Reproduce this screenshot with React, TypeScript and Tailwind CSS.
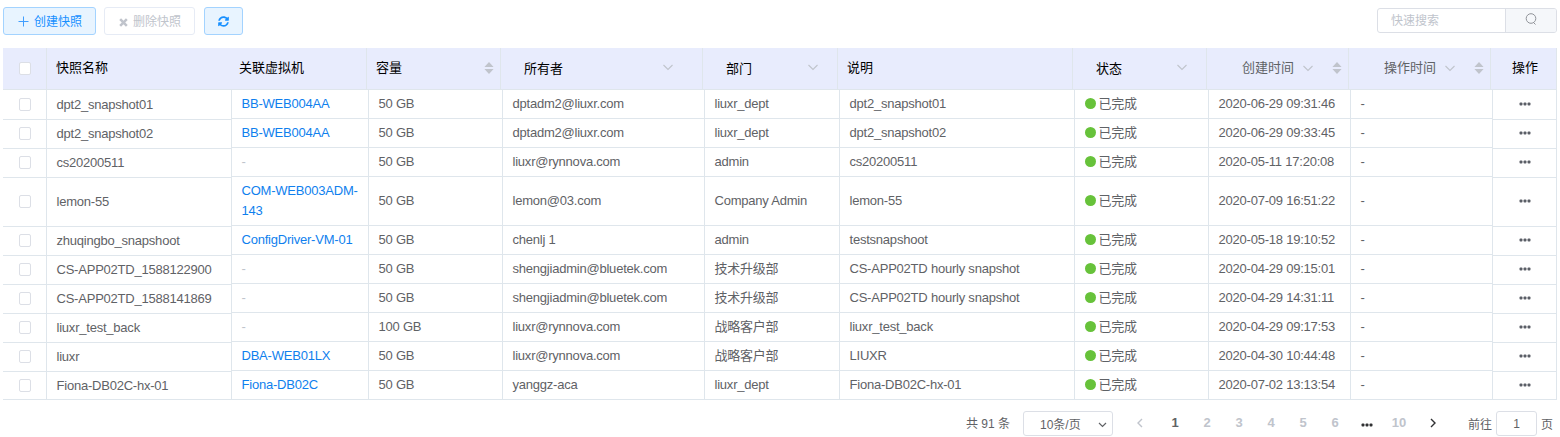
import React from "react";
import { FaSyncAlt } from "react-icons/fa";

type Row = { name: string; vm: string[]; size: string; owner: string; dept: string; desc: string; time: string };

const rows: Row[] = [
  { name: "dpt2_snapshot01", vm: ["BB-WEB004AA"], size: "50 GB", owner: "dptadm2@liuxr.com", dept: "liuxr_dept", desc: "dpt2_snapshot01", time: "2020-06-29 09:31:46" },
  { name: "dpt2_snapshot02", vm: ["BB-WEB004AA"], size: "50 GB", owner: "dptadm2@liuxr.com", dept: "liuxr_dept", desc: "dpt2_snapshot02", time: "2020-06-29 09:33:45" },
  { name: "cs20200511", vm: [], size: "50 GB", owner: "liuxr@rynnova.com", dept: "admin", desc: "cs20200511", time: "2020-05-11 17:20:08" },
  { name: "lemon-55", vm: ["COM-WEB003ADM-", "143"], size: "50 GB", owner: "lemon@03.com", dept: "Company Admin", desc: "lemon-55", time: "2020-07-09 16:51:22" },
  { name: "zhuqingbo_snapshoot", vm: ["ConfigDriver-VM-01"], size: "50 GB", owner: "chenlj 1", dept: "admin", desc: "testsnapshoot", time: "2020-05-18 19:10:52" },
  { name: "CS-APP02TD_1588122900", vm: [], size: "50 GB", owner: "shengjiadmin@bluetek.com", dept: "技术升级部", desc: "CS-APP02TD hourly snapshot", time: "2020-04-29 09:15:01" },
  { name: "CS-APP02TD_1588141869", vm: [], size: "50 GB", owner: "shengjiadmin@bluetek.com", dept: "技术升级部", desc: "CS-APP02TD hourly snapshot", time: "2020-04-29 14:31:11" },
  { name: "liuxr_test_back", vm: [], size: "100 GB", owner: "liuxr@rynnova.com", dept: "战略客户部", desc: "liuxr_test_back", time: "2020-04-29 09:17:53" },
  { name: "liuxr", vm: ["DBA-WEB01LX"], size: "50 GB", owner: "liuxr@rynnova.com", dept: "战略客户部", desc: "LIUXR", time: "2020-04-30 10:44:48" },
  { name: "Fiona-DB02C-hx-01", vm: ["Fiona-DB02C"], size: "50 GB", owner: "yanggz-aca", dept: "liuxr_dept", desc: "Fiona-DB02C-hx-01", time: "2020-07-02 13:13:54" },
];

const COLS = "grid grid-cols-[137px_134px_202px_135px_235px_134px_142px_142px]";

function sideHeight(i: number) {
  if (i === 0) return "h-[30px]";
  if (rows[i].vm.length > 1) return "h-[49px]";
  return i === rows.length - 1 ? "h-[28px]" : "h-[29px]";
}

function Checkbox() {
  return <span className="block h-[13px] w-3 rounded-[2px] border border-[#dcdfe6] bg-white" />;
}

function Chevron({ className = "" }: { className?: string }) {
  return (
    <svg className={className} width="12" height="7" viewBox="0 0 12 7" fill="none" stroke="#c0c4cc" strokeWidth="1.1">
      <path d="M1.5 1l4.5 4.4L10.5 1" />
    </svg>
  );
}

function Sort({ className = "" }: { className?: string }) {
  return (
    <svg className={className} width="10" height="12" viewBox="0 0 10 12" fill="#c0c4cc">
      <path d="M5 0l4.6 5H.4zM5 12l4.6-5H.4z" />
    </svg>
  );
}

function Head({ children, className = "" }: { children?: React.ReactNode; className?: string }) {
  return <div className={`flex h-full shrink-0 items-center border-r border-[#dfe6ec] ${className}`}>{children}</div>;
}

function Cell({ children, className = "" }: { children?: React.ReactNode; className?: string }) {
  return <div className={`flex items-center border-r border-b border-[#dfe6ec] pb-px pl-[9.5px] whitespace-nowrap ${className}`}>{children}</div>;
}

function More() {
  return (
    <svg width="12" height="4" viewBox="0 0 12 4" fill="currentColor">
      <rect x="0.5" y="0.5" width="3" height="3" rx="1" />
      <rect x="4.5" y="0.5" width="3" height="3" rx="1" />
      <rect x="8.5" y="0.5" width="3" height="3" rx="1" />
    </svg>
  );
}

export default function App() {
  return (
    <div className="h-[437px] w-[1560px] overflow-hidden bg-white px-[3px] pt-[7px] font-['Liberation_Sans','Noto_Sans_CJK_SC',sans-serif] text-[13px] leading-5 tracking-[-0.22px] text-[#5f6266]">
      <div className="flex h-[41px] items-start text-xs tracking-normal">
        <button className="flex h-7 w-[93px] items-center rounded-[3px] border border-[#a3d3ff] bg-[#e8f4ff] pl-[14px] text-[#1890ff]">
          <svg width="11" height="11" viewBox="0 0 11 11" stroke="#409eff" fill="none"><path d="M5.5 0.5v10M0.5 5.5h10" /></svg>
          <span className="ml-[5px] pt-0.5">创建快照</span>
        </button>
        <button className="ml-2 flex h-7 w-[91px] items-center rounded-[3px] border border-[#e6ebf5] bg-white pl-[14px] text-[#c0c4cc]">
          <svg className="mt-0.5" width="9" height="9" viewBox="0 0 10 10" stroke="#c0c4cc" strokeWidth="2.8"><path d="M1.3 1.3l7.4 7.4M8.7 1.3L1.3 8.7" /></svg>
          <span className="ml-[5px] pt-0.5">删除快照</span>
        </button>
        <button className="ml-[9px] flex h-7 w-[39px] items-center justify-center rounded-[3px] border border-[#a3d3ff] bg-[#e8f4ff] pt-px text-[#1890ff]">
          <FaSyncAlt size={11} />
        </button>
        <div className="mt-px ml-auto flex h-[25px] w-[180px] overflow-hidden rounded-[3px] border border-[#dcdfe6]">
          <div className="flex w-[128px] items-center border-r border-[#dcdfe6] pt-px pl-[13px] text-[#c0c4cc]">快速搜索</div>
          <div className="flex flex-1 items-start justify-center bg-[#f5f7fa] pt-1">
            <svg width="12" height="12" viewBox="0 0 12 12" fill="none" stroke="#909399"><circle cx="6" cy="5.5" r="4.8" /><path d="M8.5 9.5l2 2" /></svg>
          </div>
        </div>
      </div>

      <div className="flex h-[42px] w-[1554px] border-b border-[#dfe6ec] bg-[#e8ecfd] text-black tracking-normal">
        <Head className="w-[44px] justify-center pb-px"><Checkbox /></Head>
        <div className="flex w-[185px] items-center pb-[2px] pl-[9px]">快照名称</div>
        <Head className="w-[135px] pb-[2px] pl-[7px]">关联虚拟机</Head>
        <Head className="w-[134px] justify-between pr-[6px] pl-[9px]"><span className="pb-[2px]">容量</span><Sort className="-mt-0.5" /></Head>
        <Head className="w-[202px] justify-between pr-[28px] pl-[23px]"><span className="pt-px">所有者</span><Chevron className="-mt-0.5" /></Head>
        <Head className="w-[135px] justify-between pr-[18px] pl-[23px]"><span className="pt-px">部门</span><Chevron className="-mt-0.5" /></Head>
        <Head className="w-[235px] pb-[2px] pl-[9px]">说明</Head>
        <Head className="w-[134px] justify-between pr-[18px] pl-[23px]"><span className="pt-px">状态</span><Chevron className="-mt-0.5" /></Head>
        <Head className="w-[142px] pb-px pl-[35px] text-[#5f6266]">创建时间<Chevron className="ml-2" /><Sort className="ml-[18px]" /></Head>
        <Head className="w-[142px] pb-px pl-[35px] text-[#5f6266]">操作时间<Chevron className="ml-2" /><Sort className="ml-[18px]" /></Head>
        <Head className="w-[66px] pb-[2px] pl-[21px]">操作</Head>
      </div>

      <div className="flex w-[1554px]">
        <div className="w-[229px]">
          {rows.map((r, i) => (
            <div key={i} className={`flex border-b border-[#dfe6ec] ${sideHeight(i)}`}>
              <div className="flex w-[44px] items-center justify-center border-r border-[#dfe6ec] pb-px"><Checkbox /></div>
              <div className="flex flex-1 items-center border-r border-[#dfe6ec] pl-[9.5px]">{r.name}</div>
            </div>
          ))}
        </div>
        <div className="w-[1261px]">
          {rows.map((r, i) => (
            <div key={i} className={`${COLS} ${r.vm.length > 1 ? "h-[49px]" : "h-[29px]"}`}>
              <Cell>
                {r.vm.length ? <span className="text-[#0f7fee]">{r.vm.map((v) => <span key={v} className="block">{v}</span>)}</span> : <span className="text-[#c0c4cc]">-</span>}
              </Cell>
              <Cell>{r.size}</Cell>
              <Cell>{r.owner}</Cell>
              <Cell>{r.dept}</Cell>
              <Cell>{r.desc}</Cell>
              <Cell><span className="mr-[3px] h-[11px] w-[11px] rounded-full bg-[#67c23a]" />已完成</Cell>
              <Cell>{r.time}</Cell>
              <Cell>-</Cell>
            </div>
          ))}
        </div>
        <div className="w-[64px]">
          {rows.map((_, i) => (
            <div key={i} className={`flex items-center justify-center border-r border-b border-[#dfe6ec] pb-0.5 text-[#5a5e66] ${sideHeight(i)}`}><More /></div>
          ))}
        </div>
      </div>

      <div className="mt-[11px] flex h-[25px] items-center pl-[963px] text-[13px] tracking-normal">
        <span className="w-[57px] whitespace-nowrap text-xs">共 91 条</span>
        <div className="flex h-[25px] w-[90px] items-center justify-between rounded-[3px] border border-[#dcdfe6] pt-0.5 pr-[5px] pl-[16px] text-xs">
          <span>10条/页</span>
          <svg width="9" height="6" viewBox="0 0 9 6" fill="none" stroke="#606266" strokeWidth="1.2"><path d="M1 1l3.5 3.5L8 1" /></svg>
        </div>
        <div className="ml-[11px] flex pb-px text-center font-bold text-[#c0c4cc]">
          <span className="flex w-8 items-center justify-center"><svg width="6" height="10" viewBox="0 0 6 10" fill="none" stroke="#c0c4cc" strokeWidth="1.4"><path d="M5 1L1 5l4 4" /></svg></span>
          <span className="ml-[3px] w-8 text-[#606266]">1</span>
          {["2", "3", "4", "5", "6"].map((n) => <span key={n} className="w-8">{n}</span>)}
          <span className="flex w-8 items-center justify-center pt-[3px] text-[#303133]"><More /></span>
          <span className="w-8">10</span>
          <span className="ml-0.5 flex w-8 items-center justify-center text-[#303133]"><svg width="6" height="10" viewBox="0 0 6 10" fill="none" stroke="currentColor" strokeWidth="1.4"><path d="M1 1l4 4-4 4" /></svg></span>
        </div>
        <span className="ml-auto pt-0.5 text-xs">前往</span>
        <span className="mx-1 flex h-[25px] w-[41px] items-center justify-center rounded-[3px] border border-[#dcdfe6] pt-px text-xs">1</span>
        <span className="mr-1 pt-0.5 text-xs">页</span>
      </div>
    </div>
  );
}
